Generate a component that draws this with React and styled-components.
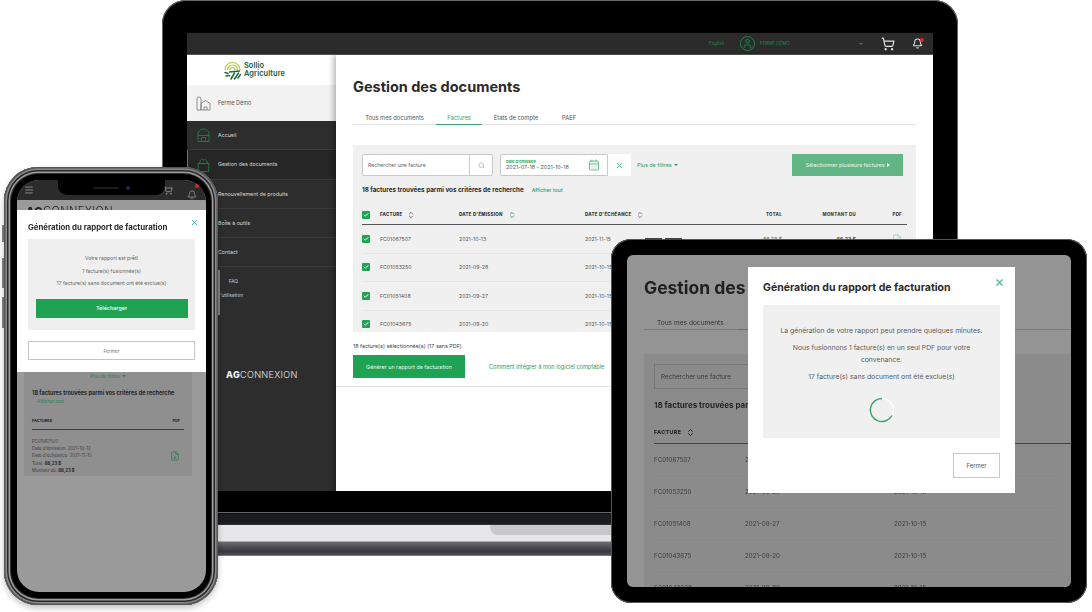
import React from 'react';
import styled, { createGlobalStyle } from 'styled-components';
import { Search, X, CalendarDays, ShoppingCart, Bell, Menu, User, ChevronsUpDown, FileDown, Check } from 'lucide-react';

const green = '#1fa352';

const GlobalStyle = createGlobalStyle`
  html, body {
    margin: 0;
    background: #fff;
    overflow: hidden;
  }
  * {
    box-sizing: border-box;
  }
`;

const Stage = styled.div`
  position: relative;
  width: 1092px;
  height: 612px;
  overflow: hidden;
  font-family: Inter, "Liberation Sans", sans-serif;
  filter: blur(0.5px);
`;

/* ---- laptop ---- */

const Laptop = styled.div`
  position: absolute;
  left: 60px;
  top: 0;
  width: 1000px;
  display: flex;
  flex-direction: column;
  align-items: center;
`;

const Lid = styled.div`
  width: 796px;
  height: 513px;
  padding: 33px 25px 22px 25px;
  background: #000;
  border-radius: 24px 24px 0 0;
  box-shadow: inset 0 0 0 1px #666;
`;

const LaptopScreen = styled.div`
  height: 100%;
  display: flex;
  flex-direction: column;
  background: #fff;
`;

const TopBar = styled.div`
  height: 22px;
  flex: none;
  display: flex;
  align-items: center;
  justify-content: flex-end;
  padding-right: 9px;
  background: #2b2b2b;
  border-bottom: 1px solid #555;
  color: #1e8a4a;
  font-size: 4.5px;
`;

const TopLabel = styled.span`
  width: ${p => p.$w}px;
`;

const TopGap = styled.span`
  width: ${p => p.$w}px;
`;

const Avatar = styled.div`
  width: 15px;
  height: 15px;
  margin-right: 5px;
  display: flex;
  align-items: center;
  justify-content: center;
  border: 1px solid #1e8a4a;
  border-radius: 50%;
`;

const Caret = styled.span`
  width: 0;
  height: 0;
  margin: 0 ${p => p.$right || 0}px 0 0;
  border-left: 2px solid transparent;
  border-right: 2px solid transparent;
  border-top: 2.5px solid ${p => p.$color || '#1e8a4a'};
  display: inline-block;
`;

const CartWrap = styled.div`
  display: flex;
  color: #e4e4e4;
`;

const BellWrap = styled.div`
  position: relative;
  width: 12px;
  height: 12px;
  color: ${p => p.$color || '#ddd'};
`;

const RedDot = styled.span`
  position: absolute;
  right: 0;
  top: 0;
  width: 4px;
  height: 4px;
  border-radius: 50%;
  background: #e8202a;
`;

const LaptopBody = styled.div`
  flex: 1;
  min-height: 0;
  display: flex;
`;

const Sidebar = styled.div`
  width: 149px;
  flex: none;
  display: flex;
  flex-direction: column;
  background: #2d2d2d;
`;

const LogoBox = styled.div`
  height: 30px;
  flex: none;
  display: flex;
  align-items: center;
  justify-content: center;
  gap: 3px;
  padding-right: 14px;
  background: #fff;
`;

const LogoText = styled.div`
  color: #1d5a38;
  font-size: 7.4px;
  font-weight: 600;
  letter-spacing: 0.1px;
  line-height: 8px;
`;

const FarmRow = styled.div`
  height: 36px;
  flex: none;
  display: flex;
  align-items: center;
  gap: 7px;
  padding-left: 9px;
  background: #f2f2f2;
  color: #555;
  font-size: 5.5px;
`;

const NavItem = styled.div`
  height: 29.3px;
  flex: none;
  display: flex;
  align-items: center;
  gap: 7px;
  padding-left: 8px;
  background: ${p => (p.$active ? '#262626' : '#2d2d2d')};
  border-bottom: 1px solid #3a3a3a;
  border-left: 1px solid ${p => (p.$active ? green : 'transparent')};
  color: #d8d8d8;
  font-size: 5.3px;
  white-space: nowrap;
`;

const SubLinks = styled.div`
  margin-top: 9px;
  height: 93px;
  color: #ccc;
  font-size: 4.8px;
`;

const SubLink = styled.div`
  width: 56px;
  height: 14px;
  line-height: 10px;
  padding-right: ${p => p.$pad || 0}px;
  text-align: right;
  white-space: nowrap;
  direction: rtl;
`;

const SideBrand = styled.div`
  padding-left: 39px;
  color: #eee;
  font-size: 9.1px;
  letter-spacing: 0.3px;
  font-weight: 300;
  white-space: nowrap;
  b {
    font-weight: 800;
  }
`;

const Main = styled.div`
  flex: 1;
  min-width: 0;
  display: flex;
  flex-direction: column;
  padding: 0 17px;
  background: #fff;
  box-shadow: -3px 0 5px rgba(0, 0, 0, 0.25);
  overflow: hidden;
`;

const PageTitle = styled.h1`
  margin: 22px 0 0;
  color: #2a2a2a;
  font-size: 14.5px;
  line-height: 20px;
  font-weight: 700;
  white-space: nowrap;
`;

const Tabs = styled.div`
  margin-top: 10px;
  height: 18px;
  flex: none;
  display: flex;
  border-bottom: 1px solid #e3e3e3;
  font-size: 5.8px;
  color: #555;
`;

const Tab = styled.div`
  width: ${p => p.$w}px;
  height: 18px;
  display: flex;
  align-items: center;
  justify-content: center;
  padding-top: 3px;
  color: ${p => (p.$active ? '#3aa56b' : '#555')};
  border-bottom: 1px solid ${p => (p.$active ? '#3aa56b' : 'transparent')};
  white-space: nowrap;
`;

const Panel = styled.div`
  margin-top: 20px;
  height: 187px;
  flex: none;
  padding: 9px 9px 0;
  background: #f0f0f0;
  overflow: hidden;
`;

const Toolbar = styled.div`
  height: 22px;
  display: flex;
  align-items: stretch;
`;

const SearchBox = styled.div`
  width: 131px;
  display: flex;
  align-items: center;
  justify-content: space-between;
  padding-left: 5px;
  background: #fff;
  border: 1px solid #c9c9c9;
  border-radius: 2px;
  color: #666;
  font-size: 5.2px;
`;

const SearchBtn = styled.div`
  width: 23px;
  height: 100%;
  display: flex;
  align-items: center;
  justify-content: center;
  border-left: 1px solid #ccc;
  color: #bbb;
`;

const DateBox = styled.div`
  width: 108px;
  margin-left: 7px;
  display: flex;
  align-items: center;
  justify-content: space-between;
  padding: 0 7px 0 5px;
  background: #fff;
  border: 1px solid #c9c9c9;
  border-radius: 2px 0 0 2px;
  color: #6fbf92;
`;

const DateText = styled.div`
  color: #555;
  font-size: 5.4px;
  line-height: 7px;
  small {
    display: block;
    color: ${green};
    font-size: 3.8px;
    line-height: 5px;
    font-weight: 700;
  }
`;

const ClearBtn = styled.div`
  width: 23px;
  display: flex;
  align-items: center;
  justify-content: center;
  background: #fff;
  color: #5bbb8a;
`;

const FilterLink = styled.div`
  margin-left: 6px;
  display: flex;
  align-items: center;
  gap: 2px;
  color: #2e9e60;
  font-size: 5.4px;
  white-space: nowrap;
`;

const SelectBtn = styled.div`
  margin: 0 4px 0 auto;
  width: 111px;
  display: flex;
  align-items: center;
  justify-content: center;
  gap: 2px;
  background: #62b585;
  color: #e8f5ee;
  font-size: 5.4px;
  white-space: nowrap;
`;

const Arrow = styled.span`
  width: 0;
  height: 0;
  border-top: 2.5px solid transparent;
  border-bottom: 2.5px solid transparent;
  border-left: 3px solid #fff;
`;

const ResultLine = styled.div`
  margin-top: 8px;
  height: 12px;
  display: flex;
  align-items: center;
  gap: 8px;
  color: #2b2b2b;
  font-size: 6.3px;
  font-weight: 700;
  white-space: nowrap;
  span {
    color: #2e9e60;
    font-size: 5.2px;
    font-weight: 500;
  }
`;

const columns = '18px 79px 126px 100px 97px 74px 50px';

const TableHead = styled.div`
  margin-top: 12px;
  height: 17px;
  display: grid;
  grid-template-columns: ${columns};
  align-items: center;
  padding-bottom: 3px;
  border-bottom: 1.5px solid #555;
  color: #333;
  font-size: 4.4px;
  font-weight: 800;
  letter-spacing: 0.3px;
`;

const HeadCell = styled.div`
  display: flex;
  align-items: center;
  gap: 5px;
  justify-content: ${p => (p.$right ? 'flex-end' : 'flex-start')};
  padding-right: ${p => p.$pad || 0}px;
  color: ${p => (p.$right ? '#444' : '#333')};
  white-space: nowrap;
`;

const SortIcon = styled(ChevronsUpDown)`
  color: ${p => p.$color || '#777'};
`;

const Row = styled.div`
  height: 28.5px;
  display: grid;
  grid-template-columns: ${columns};
  align-items: center;
  border-bottom: 1px solid #e6e6e6;
  color: #555;
  font-size: 5.2px;
`;

const RightCell = styled.div`
  display: flex;
  justify-content: flex-end;
  padding-right: ${p => p.$pad || 0}px;
  font-weight: ${p => (p.$bold ? 700 : 400)};
  color: ${p => p.$color || 'inherit'};
`;

const CheckBox = styled.div`
  width: 8px;
  height: 8px;
  display: flex;
  align-items: center;
  justify-content: center;
  background: ${green};
  color: #fff;
  border-radius: 1px;
`;

const FooterBar = styled.div`
  height: 55px;
  flex: none;
  margin: 0 -17px;
  padding: 10px 17px 0;
  border-bottom: 1px solid #e3e3e3;
  color: #444;
  font-size: 5.4px;
  line-height: 8px;
`;

const FooterActions = styled.div`
  margin-top: 5px;
  display: flex;
  align-items: center;
  gap: 24px;
  color: #2e9e60;
  font-size: 5.6px;
  white-space: nowrap;
`;

const PrimaryBtn = styled.div`
  width: ${p => p.$w || '112px'};
  height: ${p => p.$h || 23}px;
  margin-top: ${p => p.$top || 0}px;
  display: flex;
  align-items: center;
  justify-content: center;
  background: ${green};
  color: #e9f7ef;
  font-size: 5.4px;
  font-weight: ${p => p.$weight || 400};
`;

const Base = styled.div`
  width: 1000px;
  height: 43px;
  flex: none;
  display: flex;
  flex-direction: column;
`;

const Hinge = styled.div`
  height: 12px;
  background: #1b1c1f;
  border-top: 1px solid #101012;
  border-bottom: 1px solid #333;
`;

const Deck = styled.div`
  height: 17px;
  background: #e7e7e9;
  border-bottom: 1px solid #aaa;
`;

const Notch = styled.div`
  width: 300px;
  height: 10px;
  margin-left: 430px;
  background: #c8c8ca;
  border-radius: 0 0 0 8px;
`;

const Lip = styled.div`
  height: 14px;
  background: linear-gradient(#6c6c70, #38383c 70%, #4e4e52);
  border-bottom: 1px solid #777;
`;

/* ---- tablet ---- */

const Tablet = styled.div`
  position: absolute;
  left: 611px;
  top: 239px;
  width: 476px;
  height: 364px;
  padding: 16px;
  background: #000;
  border-radius: 20px;
  box-shadow: inset 0 0 0 1px #555;
`;

const TabletKey = styled.span`
  position: absolute;
  top: -1px;
  left: ${p => p.$left}px;
  width: 17px;
  height: 2px;
  background: #444;
`;

const TabletScreen = styled.div`
  position: relative;
  height: 100%;
  background: #939493;
  border-radius: 6px;
  overflow: hidden;
  color: #333;
`;

const TabletPage = styled.div`
  padding-left: 17px;
  h1 {
    margin: 21px 0 0;
    color: #1f1f1f;
    font-size: 17.5px;
    line-height: 24px;
    white-space: nowrap;
  }
`;

const TabletTabs = styled.div`
  margin-top: 12px;
  height: 18px;
  display: flex;
  padding: 5px 0 0 13px;
  border-bottom: 1px solid #7c7c7c;
  font-size: 6.6px;
  line-height: 12px;
  color: #333;
`;

const TabletActive = styled.span`
  width: 12px;
  height: 13px;
  margin-left: 14px;
  border-bottom: 1px solid #3c8c5e;
`;

const TabletPanel = styled.div`
  margin-top: 24px;
  height: 260px;
  padding: 10px;
  background: #8a8b8a;
`;

const TabletSearch = styled.div`
  width: 200px;
  height: 25px;
  display: flex;
  align-items: center;
  padding-left: 6px;
  border: 1px solid #777;
  font-size: 6.3px;
  color: #3a3a3a;
`;

const TabletFound = styled.div`
  margin-top: 10px;
  height: 12px;
  line-height: 12px;
  font-size: 8px;
  font-weight: 700;
  color: #262626;
  white-space: nowrap;
`;

const TabletHead = styled.div`
  margin-top: 15px;
  height: 18px;
  padding-top: 2px;
  display: flex;
  gap: 5px;
  align-items: flex-start;
  margin-right: -10px;
  border-bottom: 1.5px solid #444;
  font-size: 5.3px;
  line-height: 9px;
  font-weight: 800;
  letter-spacing: 0.4px;
  color: #222;
`;

const TabletRow = styled.div`
  height: 32px;
  display: grid;
  grid-template-columns: 91px 149px 100px;
  align-items: center;
  font-size: 6.2px;
  color: #3d3d3d;
  border-bottom: 1px solid #868786;
  white-space: nowrap;
`;

const Modal = styled.div`
  position: absolute;
  left: 121px;
  top: 12px;
  width: 267px;
  height: 226px;
  padding: 0 15px;
  display: flex;
  flex-direction: column;
  background: #fff;
`;

const ModalHead = styled.div`
  height: 38px;
  flex: none;
  display: flex;
  align-items: center;
  justify-content: space-between;
  padding-top: 3px;
  color: #2a2a2a;
  font-size: 10.5px;
  font-weight: 700;
  white-space: nowrap;
`;

const CloseIcon = styled(X)`
  color: #4db892;
  margin: -11px -5px 0 0;
`;

const ModalPanel = styled.div`
  height: 133px;
  flex: none;
  padding-top: 20px;
  display: flex;
  flex-direction: column;
  align-items: center;
  background: #eff0ef;
  color: #5c5c5c;
  font-size: 6.8px;
  line-height: 12px;
  text-align: center;
`;

const ModalText = styled.p`
  margin: 0 0 5px;
  width: ${p => p.$w || 220}px;
`;

const Spinner = styled.svg`
  margin-top: 9px;
`;

const GhostBtn = styled.div`
  width: 47px;
  height: 25px;
  margin: 15px 0 0 auto;
  display: flex;
  align-items: center;
  justify-content: center;
  border: 1px solid #c8c8c8;
  color: #555;
  font-size: 6px;
`;

/* ---- phone ---- */

const Phone = styled.div`
  position: absolute;
  left: 4px;
  top: 167px;
  width: 214px;
  height: 438px;
  padding: 13px 12px 13px 13px;
  background: #000;
  border-radius: 34px;
  box-shadow: inset 0 0 0 1.5px #555, inset 0 0 0 3px #8a8a8a, inset 0 0 0 4.5px #2a2a2a,
    inset 0 0 0 6px #9c9c9c, inset 0 0 0 7px #333, 0 3px 6px rgba(0, 0, 0, 0.25);
`;

const SideKey = styled.span`
  position: absolute;
  ${p => p.$side}: -2px;
  top: ${p => p.$top}px;
  width: 2px;
  height: ${p => p.$h}px;
  background: #777;
`;

const PhoneScreen = styled.div`
  position: relative;
  height: 100%;
  display: flex;
  flex-direction: column;
  background: #9a9a9a;
  border-radius: 22px;
  overflow: hidden;
`;

const PhoneBar = styled.div`
  height: 20px;
  flex: none;
  display: flex;
  align-items: center;
  gap: 14px;
  padding: 0 7px 0 7px;
  background: #2b2b2b;
  color: #888;
`;

const PhoneBarGap = styled.div`
  flex: 1;
`;

const PhoneNotch = styled.div`
  position: absolute;
  left: 41px;
  top: 0;
  width: 107px;
  height: 15px;
  display: flex;
  align-items: center;
  justify-content: center;
  gap: 7px;
  background: #000;
  border-radius: 0 0 9px 9px;
  &::before {
    content: '';
    width: 26px;
    height: 2px;
    background: #1c1c1c;
    border-radius: 1px;
  }
  &::after {
    content: '';
    width: 4px;
    height: 4px;
    background: #1a2a50;
    border-radius: 50%;
  }
`;

const PhoneBrand = styled.div`
  height: 10px;
  flex: none;
  padding: 5px 0 0 9px;
  color: #222;
  font-size: 11px;
  line-height: 12px;
  letter-spacing: 0.4px;
  font-weight: 300;
  overflow: hidden;
  white-space: nowrap;
  b {
    font-weight: 800;
  }
`;

const PhoneModal = styled.div`
  height: 162px;
  flex: none;
  padding: 0 11px;
  background: #fff;
  display: flex;
  flex-direction: column;
`;

const PhoneModalHead = styled.div`
  position: relative;
  height: 29px;
  flex: none;
  display: flex;
  align-items: center;
  padding-top: 4px;
  color: #2a2a2a;
  font-size: 7.8px;
  font-weight: 700;
  white-space: nowrap;
`;

const PhoneClose = styled(X)`
  position: absolute;
  right: -4px;
  top: 8px;
  color: #4db892;
`;

const PhonePanel = styled.div`
  height: 91px;
  flex: none;
  padding-top: 13px;
  display: flex;
  flex-direction: column;
  align-items: center;
  background: #efefef;
  color: #666;
  font-size: 5.1px;
  line-height: 12.5px;
  white-space: nowrap;
`;

const PhoneGhost = styled.div`
  height: 19px;
  margin-top: 11px;
  flex: none;
  display: flex;
  align-items: center;
  justify-content: center;
  border: 1px solid #c4c4c4;
  color: #777;
  font-size: 4.8px;
`;

const PhoneList = styled.div`
  width: 168px;
  height: 104px;
  margin-left: 7px;
  flex: none;
  padding: 0 8px;
  background: #8f8f8f;
  color: #3c3c3c;
  font-size: 4.4px;
`;

const PhoneFilter = styled.div`
  height: 8px;
  display: flex;
  align-items: center;
  justify-content: center;
  gap: 2px;
  color: #2c7d52;
  font-size: 4.6px;
`;

const PhoneFound = styled.div`
  margin-top: 9px;
  height: 8px;
  line-height: 8px;
  color: #262626;
  font-size: 5.55px;
  font-weight: 700;
  white-space: nowrap;
`;

const PhoneAll = styled.div`
  margin-top: 1px;
  padding-left: 5px;
  color: #2c7d52;
  font-size: 4.6px;
  line-height: 7px;
`;

const PhoneHead = styled.div`
  margin-top: 13px;
  height: 12px;
  display: flex;
  justify-content: space-between;
  align-items: flex-start;
  padding-right: 4px;
  border-bottom: 1px solid #3c3c3c;
  font-size: 3.8px;
  font-weight: 800;
  color: #2a2a2a;
`;

const PhoneItem = styled.div`
  margin-top: 8px;
  display: flex;
  align-items: center;
  justify-content: space-between;
  line-height: 7.2px;
  padding-right: 4px;
  b {
    font-weight: 700;
    color: #262626;
  }
`;

const PdfIcon = styled(FileDown)`
  color: ${p => p.$color || '#2c7d52'};
`;

const rows = [
  ['FC01067507', '2021-10-13', '2021-11-15'],
  ['FC01053250', '2021-09-28', '2021-10-15'],
  ['FC01051408', '2021-09-27', '2021-10-15'],
  ['FC01043675', '2021-09-20', '2021-10-15'],
];

const tabletRows = [...rows, ['FC01043668', '2021-09-20', '2021-10-15']];

function SollioLogo() {
  return (
    <svg width="17" height="20" viewBox="0 0 17 20" fill="none">
      <g stroke="#b7cc3a" strokeWidth="1.2">
        <path d="M1 10a7.5 7.5 0 0 1 15 0" />
        <path d="M3.5 10a5 5 0 0 1 10 0" />
        <path d="M6 10a2.5 2.5 0 0 1 5 0" />
      </g>
      <g stroke="#1e6a3d" strokeWidth="1.5" strokeLinecap="round">
        <path d="M1 12.5l3 1" />
        <path d="M2 16l3.5-.5" />
        <path d="M7 19l3.5-6" />
        <path d="M10.5 19l4-6" />
        <path d="M14 18l2.5-3.5" />
        <path d="M5.5 12l10-1" />
      </g>
    </svg>
  );
}

function FarmIcon() {
  return (
    <svg width="15" height="15" viewBox="0 0 15 15" fill="none" stroke="#777" strokeWidth="0.8">
      <path d="M1 14V3a2 2 0 0 1 4 0v11" />
      <path d="M5 14V7.5L9.5 4.5 14 7.5V14H1" />
      <path d="M8 14v-3h3v3" />
    </svg>
  );
}

function BarnIcon() {
  return (
    <svg width="15" height="15" viewBox="0 0 15 15" fill="none" stroke="#1b7a42" strokeWidth="1">
      <path d="M2 13.5V6a5.5 5 0 0 1 11 0v7.5z" />
      <path d="M2 7.5h11M5.5 13.5v-4h4v4" />
    </svg>
  );
}

function BasketIcon() {
  return (
    <svg width="15" height="15" viewBox="0 0 15 15" fill="none" stroke="#1b7a42" strokeWidth="1">
      <path d="M2 6.5h11l-.5 8h-10z" />
      <path d="M3.5 6.5C4 2.5 6 1.5 7.5 3c1.5-1.5 3.5-.5 4 3.5" />
    </svg>
  );
}

function BrandName({ as: Comp = SideBrand }) {
  return (
    <Comp>
      <b>AG</b>CONNEXION
    </Comp>
  );
}

export default function App() {
  return (
    <Stage>
      <GlobalStyle />

      <Laptop>
        <Lid>
          <LaptopScreen>
            <TopBar>
              <TopLabel $w={31}>English</TopLabel>
              <Avatar><User size={11} strokeWidth={2} /></Avatar>
              <TopLabel $w={99}>FERME DÉMO</TopLabel>
              <Caret $right={18} />
              <CartWrap><ShoppingCart size={14} strokeWidth={2} /></CartWrap>
              <TopGap $w={17} />
              <BellWrap><Bell size={11} strokeWidth={2.2} /><RedDot /></BellWrap>
            </TopBar>
            <LaptopBody>
              <Sidebar>
                <LogoBox>
                  <SollioLogo />
                  <LogoText>Sollio<br />Agriculture</LogoText>
                </LogoBox>
                <FarmRow><FarmIcon />Ferme Démo</FarmRow>
                <NavItem><BarnIcon />Accueil</NavItem>
                <NavItem $active><BasketIcon />Gestion des documents</NavItem>
                <NavItem><BarnIcon />Renouvellement de produits</NavItem>
                <NavItem><BarnIcon />Boîte à outils</NavItem>
                <NavItem><BarnIcon />Contact</NavItem>
                <SubLinks>
                  <SubLink $pad={5}>FAQ</SubLink>
                  <SubLink>Guide de l'utilisation</SubLink>
                </SubLinks>
                <BrandName />
              </Sidebar>
              <Main>
                <PageTitle>Gestion des documents</PageTitle>
                <Tabs>
                  <Tab $w={83}>Tous mes documents</Tab>
                  <Tab $w={46} $active>Factures</Tab>
                  <Tab $w={68}>États de compte</Tab>
                  <Tab $w={38}>PAEF</Tab>
                </Tabs>
                <Panel>
                  <Toolbar>
                    <SearchBox>
                      Rechercher une facture
                      <SearchBtn><Search size={7} strokeWidth={3} /></SearchBtn>
                    </SearchBox>
                    <DateBox>
                      <DateText><small>Date d'émission</small>2021-07-18 - 2021-10-18</DateText>
                      <CalendarDays size={12} strokeWidth={2} />
                    </DateBox>
                    <ClearBtn><X size={9} strokeWidth={2.6} /></ClearBtn>
                    <FilterLink>Plus de filtres <Caret $color="#2e9e60" /></FilterLink>
                    <SelectBtn>Sélectionner plusieurs factures <Arrow /></SelectBtn>
                  </Toolbar>
                  <ResultLine>
                    18 factures trouvées parmi vos critères de recherche
                    <span>Afficher tout</span>
                  </ResultLine>
                  <TableHead>
                    <CheckBox><Check size={6} strokeWidth={4} /></CheckBox>
                    <HeadCell>FACTURE <SortIcon size={8} strokeWidth={3} /></HeadCell>
                    <HeadCell>DATE D'ÉMISSION <SortIcon size={8} strokeWidth={3} $color="#3aa56b" /></HeadCell>
                    <HeadCell>DATE D'ÉCHÉANCE <SortIcon size={8} strokeWidth={3} /></HeadCell>
                    <HeadCell $right>TOTAL</HeadCell>
                    <HeadCell $right>MONTANT DÛ</HeadCell>
                    <HeadCell $right $pad={4}>PDF</HeadCell>
                  </TableHead>
                  {rows.map(r => (
                    <Row key={r[0]}>
                      <CheckBox><Check size={6} strokeWidth={4} /></CheckBox>
                      <span>{r[0]}</span>
                      <span>{r[1]}</span>
                      <span>{r[2]}</span>
                      <RightCell>66,23 $</RightCell>
                      <RightCell $bold>66,23 $</RightCell>
                      <RightCell $pad={4} $color="#8fd0a9"><FileDown size={10} strokeWidth={1.8} /></RightCell>
                    </Row>
                  ))}
                </Panel>
                <FooterBar>
                  18 facture(s) sélectionnée(s) (17 sans PDF)
                  <FooterActions>
                    <PrimaryBtn>Générer un rapport de facturation</PrimaryBtn>
                    Comment intégrer à mon logiciel comptable
                  </FooterActions>
                </FooterBar>
              </Main>
            </LaptopBody>
          </LaptopScreen>
        </Lid>
        <Base>
          <Hinge />
          <Deck><Notch /></Deck>
          <Lip />
        </Base>
      </Laptop>

      <Tablet>
        <TabletKey $left={34} />
        <TabletKey $left={54} />
        <TabletScreen>
          <TabletPage>
            <h1>Gestion des documents</h1>
            <TabletTabs>
              Tous mes documents
              <TabletActive />
            </TabletTabs>
            <TabletPanel>
              <TabletSearch>Rechercher une facture</TabletSearch>
              <TabletFound>18 factures trouvées parmi vos critères</TabletFound>
              <TabletHead>FACTURE <ChevronsUpDown size={9} strokeWidth={2.6} /></TabletHead>
              {tabletRows.map(r => (
                <TabletRow key={r[0]}>
                  <span>{r[0]}</span>
                  <span>{r[1]}</span>
                  <span>{r[2]}</span>
                </TabletRow>
              ))}
            </TabletPanel>
          </TabletPage>
          <Modal>
            <ModalHead>
              Génération du rapport de facturation
              <CloseIcon size={11} strokeWidth={2.4} />
            </ModalHead>
            <ModalPanel>
              <ModalText>La génération de votre rapport peut prendre quelques minutes.</ModalText>
              <ModalText $w={190}>Nous fusionnons 1 facture(s) en un seul PDF pour votre convenance.</ModalText>
              <ModalText>17 facture(s) sans document ont été exclue(s)</ModalText>
              <Spinner width="26" height="26" viewBox="0 0 26 26" fill="none" strokeWidth="1.5">
                <circle cx="13" cy="13" r="11.5" stroke="#fff" />
                <path d="M13 1.5a11.5 11.5 0 1 0 10 17" stroke="#3aa56b" />
              </Spinner>
            </ModalPanel>
            <GhostBtn>Fermer</GhostBtn>
          </Modal>
        </TabletScreen>
      </Tablet>

      <Phone>
        <SideKey $side="left" $top={58} $h={17} />
        <SideKey $side="left" $top={91} $h={30} />
        <SideKey $side="left" $top={130} $h={31} />
        <SideKey $side="right" $top={103} $h={45} />
        <PhoneScreen>
          <PhoneBar>
            <Menu size={10} strokeWidth={2.4} />
            <PhoneBarGap />
            <ShoppingCart size={10} strokeWidth={2.4} />
            <BellWrap $color="#888"><Bell size={10} strokeWidth={2.4} /><RedDot /></BellWrap>
          </PhoneBar>
          <PhoneNotch />
          <BrandName as={PhoneBrand} />
          <PhoneModal>
            <PhoneModalHead>
              Génération du rapport de facturation
              <PhoneClose size={9} strokeWidth={2.6} />
            </PhoneModalHead>
            <PhonePanel>
              <span>Votre rapport est prêt!</span>
              <span>1 facture(s) fusionnée(s)</span>
              <span>17 facture(s) sans document ont été exclue(s)</span>
              <PrimaryBtn $w="152px" $h={19} $top={9} $weight={600}>Télécharger</PrimaryBtn>
            </PhonePanel>
            <PhoneGhost>Fermer</PhoneGhost>
          </PhoneModal>
          <PhoneList>
            <PhoneFilter>Plus de filtres <Caret $color="#2c7d52" /></PhoneFilter>
            <PhoneFound>18 factures trouvées parmi vos critères de recherche</PhoneFound>
            <PhoneAll>Afficher tout</PhoneAll>
            <PhoneHead><span>FACTURES</span><span>PDF</span></PhoneHead>
            <PhoneItem>
              <div>
                FC01067507<br />
                Date d'émission: 2021-10-12<br />
                Date d'échéance: 2021-11-15<br />
                Total: <b>66,23 $</b><br />
                Montant dû: <b>66,23 $</b>
              </div>
              <PdfIcon size={10} strokeWidth={2} />
            </PhoneItem>
          </PhoneList>
        </PhoneScreen>
      </Phone>
    </Stage>
  );
}
